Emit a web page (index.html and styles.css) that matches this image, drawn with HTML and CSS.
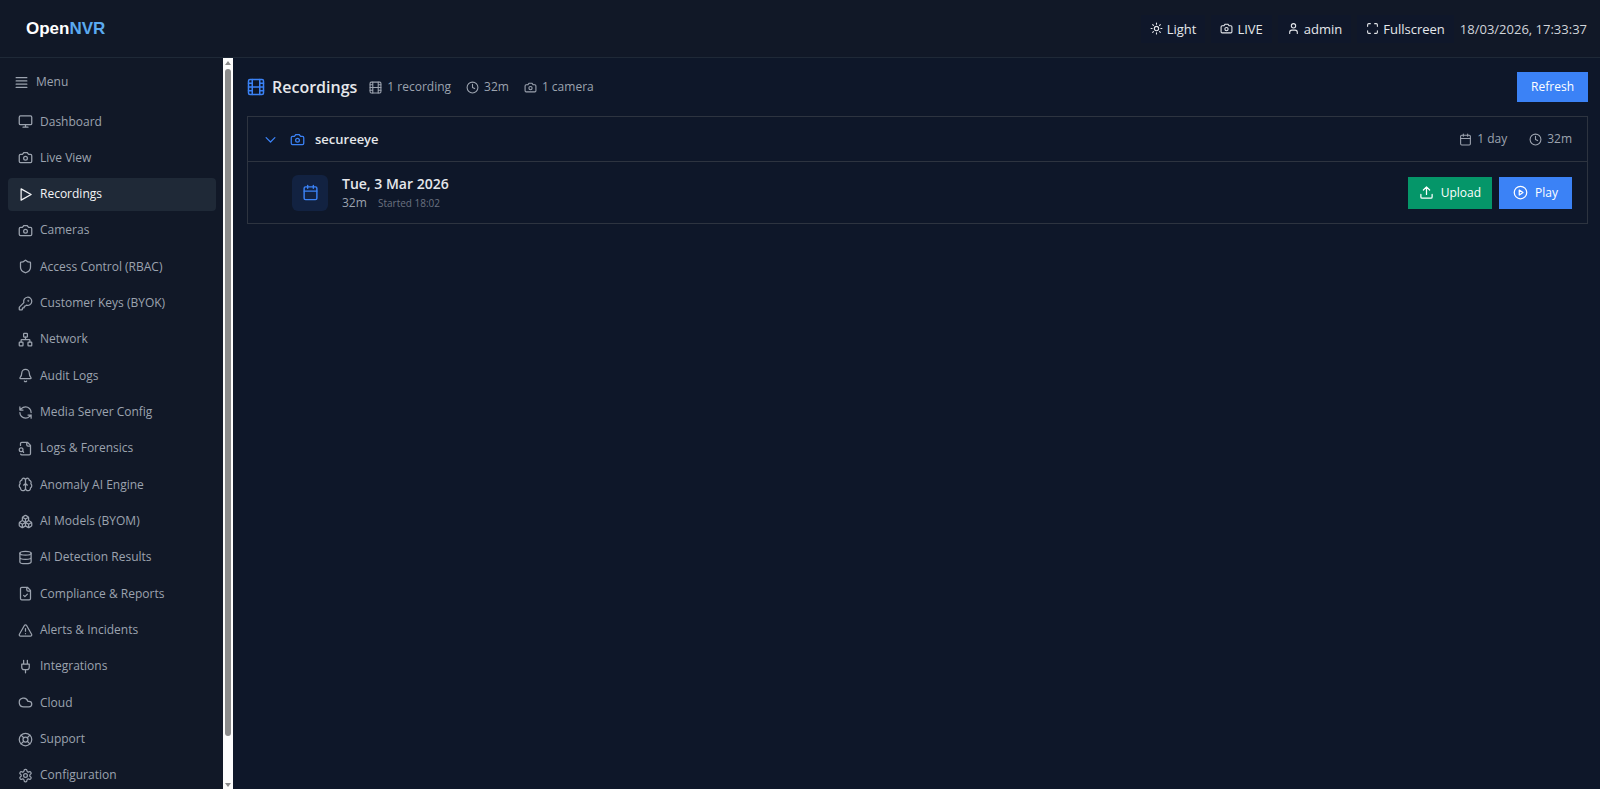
FILE: index.html
```html
<!DOCTYPE html>
<html lang="en">
<head>
	<meta charset="utf-8">
	<title>OpenNVR</title>
	<link rel="stylesheet" href="styles.css">
</head>
<body>
	<!-- icon sprite -->
	<svg class="sprite" aria-hidden="true">
		<symbol id="i-menu" viewBox="0 0 24 24"><path d="M2 3h20M2 9h20M2 15h20M2 21h20"/></symbol>
		<symbol id="i-monitor" viewBox="0 0 24 24"><rect x="2" y="3" width="20" height="14" rx="2"/><path d="M8 21h8M12 17v4"/></symbol>
		<symbol id="i-camera" viewBox="0 0 24 24"><path d="M14.500 4h-5L7 7H4a2 2 0 0 0-2 2v9a2 2 0 0 0 2 2h16a2 2 0 0 0 2-2V9a2 2 0 0 0-2-2h-3z"/><circle cx="12" cy="13" r="3"/></symbol>
		<symbol id="i-play" viewBox="0 0 24 24"><path d="M5 3l16 9-16 9z"/></symbol>
		<symbol id="i-shield" viewBox="0 0 24 24"><path d="M20 13c0 5-3.500 7.500-7.660 8.950a1 1 0 0 1-.67-.01C7.500 20.500 4 18 4 13V6a1 1 0 0 1 1-1c2 0 4.500-1.200 6.240-2.720a1.170 1.170 0 0 1 1.520 0C14.510 3.810 17 5 19 5a1 1 0 0 1 1 1z"/></symbol>
		<symbol id="i-key" viewBox="0 0 24 24"><path d="M2.586 17.414A2 2 0 0 0 2 18.828V21a1 1 0 0 0 1 1h3a1 1 0 0 0 1-1v-1a1 1 0 0 1 1-1h1a1 1 0 0 0 1-1v-1a1 1 0 0 1 1-1h.172a2 2 0 0 0 1.414-.586l.814-.814a6.500 6.500 0 1 0-4-4z"/><circle cx="16.500" cy="7.500" r=".5"/></symbol>
		<symbol id="i-network" viewBox="0 0 24 24"><rect x="16" y="16" width="6" height="6" rx="1"/><rect x="2" y="16" width="6" height="6" rx="1"/><rect x="9" y="2" width="6" height="6" rx="1"/><path d="M5 16v-3a1 1 0 0 1 1-1h12a1 1 0 0 1 1 1v3M12 12V8"/></symbol>
		<symbol id="i-bell" viewBox="0 0 24 24"><path d="M10.268 21a2 2 0 0 0 3.464 0M3.262 15.326A1 1 0 0 0 4 17h16a1 1 0 0 0 .74-1.673C19.410 13.956 18 12.499 18 8A6 6 0 0 0 6 8c0 4.499-1.411 5.956-2.738 7.326"/></symbol>
		<symbol id="i-refresh" viewBox="0 0 24 24"><path d="M21 12a9 9 0 0 0-9-9 9.750 9.750 0 0 0-6.740 2.740L3 8M3 3v5h5M3 12a9 9 0 0 0 9 9 9.750 9.750 0 0 0 6.740-2.740L21 16M16 16h5v5"/></symbol>
		<symbol id="i-filesearch" viewBox="0 0 24 24"><path d="M14 2v4a2 2 0 0 0 2 2h4M4.268 21a2 2 0 0 0 1.727 1H18a2 2 0 0 0 2-2V7l-5-5H6a2 2 0 0 0-2 2v3M9 18l-1.500-1.500"/><circle cx="5" cy="14" r="3"/></symbol>
		<symbol id="i-brain" viewBox="0 0 24 24"><path d="M12 5a3 3 0 1 0-5.997.125 4 4 0 0 0-2.526 5.770 4 4 0 0 0 .556 6.588A4 4 0 1 0 12 18zM12 5a3 3 0 1 1 5.997.125 4 4 0 0 1 2.526 5.770 4 4 0 0 1-.556 6.588A4 4 0 1 1 12 18zM9 13a4.500 4.500 0 0 0 3-4 4.500 4.500 0 0 0 3 4"/></symbol>
		<symbol id="i-boxes" viewBox="0 0 24 24"><path d="M2.970 12.920A2 2 0 0 0 2 14.630v3.240a2 2 0 0 0 .970 1.710l3 1.800a2 2 0 0 0 2.060 0L12 19v-5.500l-5-3zM7 16.500l-4.740-2.850M7 16.500l5-3M7 16.500v5.170M12 13.500V19l3.970 2.380a2 2 0 0 0 2.060 0l3-1.800a2 2 0 0 0 .970-1.710v-3.240a2 2 0 0 0-.970-1.710L17 10.500zM17 16.500l-5-3M17 16.500l4.740-2.850M17 16.500v5.170M7.970 4.420A2 2 0 0 0 7 6.130v4.370l5 3 5-3V6.130a2 2 0 0 0-.970-1.710l-3-1.800a2 2 0 0 0-2.060 0zM12 8L7.260 5.150M12 8l4.740-2.850M12 13.500V8"/></symbol>
		<symbol id="i-database" viewBox="0 0 24 24"><ellipse cx="12" cy="5" rx="9" ry="3"/><path d="M3 5v14a9 3 0 0 0 18 0V5M3 12a9 3 0 0 0 18 0"/></symbol>
		<symbol id="i-filecheck" viewBox="0 0 24 24"><path d="M15 2H6a2 2 0 0 0-2 2v16a2 2 0 0 0 2 2h12a2 2 0 0 0 2-2V7zM14 2v4a2 2 0 0 0 2 2h4M9 15l2 2 4-4"/></symbol>
		<symbol id="i-alert" viewBox="0 0 24 24"><path d="M21.730 18l-8-14a2 2 0 0 0-3.480 0l-8 14A2 2 0 0 0 4 21h16a2 2 0 0 0 1.730-3M12 9v4M12 17h.01"/></symbol>
		<symbol id="i-plug" viewBox="0 0 24 24"><path d="M12 22v-5M9 8V2M15 8V2M18 8v5a4 4 0 0 1-4 4h-4a4 4 0 0 1-4-4V8z"/></symbol>
		<symbol id="i-cloud" viewBox="0 0 24 24"><path d="M17.500 19H9a7 7 0 1 1 6.710-9h1.790a4.500 4.500 0 1 1 0 9z"/></symbol>
		<symbol id="i-support" viewBox="0 0 24 24"><circle cx="12" cy="12" r="10"/><circle cx="12" cy="12" r="4"/><path d="M4.930 4.930l4.240 4.240M14.830 9.170l4.240-4.240M14.830 14.830l4.240 4.240M9.170 14.830l-4.240 4.240"/></symbol>
		<symbol id="i-settings" viewBox="0 0 24 24"><path d="M12.220 2h-.44a2 2 0 0 0-2 2v.18a2 2 0 0 1-1 1.730l-.43.25a2 2 0 0 1-2 0l-.15-.08a2 2 0 0 0-2.730.73l-.22.38a2 2 0 0 0 .73 2.730l.15.1a2 2 0 0 1 1 1.720v.51a2 2 0 0 1-1 1.740l-.15.09a2 2 0 0 0-.73 2.730l.22.38a2 2 0 0 0 2.730.73l.15-.08a2 2 0 0 1 2 0l.43.25a2 2 0 0 1 1 1.730V20a2 2 0 0 0 2 2h.44a2 2 0 0 0 2-2v-.18a2 2 0 0 1 1-1.730l.43-.25a2 2 0 0 1 2 0l.15.08a2 2 0 0 0 2.730-.73l.22-.39a2 2 0 0 0-.73-2.730l-.15-.08a2 2 0 0 1-1-1.740v-.5a2 2 0 0 1 1-1.740l.15-.09a2 2 0 0 0 .73-2.730l-.22-.38a2 2 0 0 0-2.730-.73l-.15.08a2 2 0 0 1-2 0l-.43-.25a2 2 0 0 1-1-1.730V4a2 2 0 0 0-2-2z"/><circle cx="12" cy="12" r="3"/></symbol>
		<symbol id="i-sun" viewBox="0 0 24 24"><circle cx="12" cy="12" r="4"/><path d="M12 2v2M12 20v2M4.930 4.930l1.410 1.410M17.660 17.660l1.410 1.410M2 12h2M20 12h2M6.340 17.660l-1.410 1.410M19.070 4.930l-1.410 1.410"/></symbol>
		<symbol id="i-user" viewBox="0 0 24 24"><path d="M19 21v-2a4 4 0 0 0-4-4H9a4 4 0 0 0-4 4v2"/><circle cx="12" cy="7" r="4"/></symbol>
		<symbol id="i-full" viewBox="0 0 24 24"><path d="M8 3H5a2 2 0 0 0-2 2v3M21 8V5a2 2 0 0 0-2-2h-3M3 16v3a2 2 0 0 0 2 2h3M16 21h3a2 2 0 0 0 2-2v-3"/></symbol>
		<symbol id="i-film" viewBox="0 0 24 24"><rect x="2" y="2" width="20" height="20" rx="2"/><path d="M7 2v20M17 2v20M2 12h20M2 7h5M2 17h5M17 17h5M17 7h5"/></symbol>
		<symbol id="i-clock" viewBox="0 0 24 24"><circle cx="12" cy="12" r="10"/><path d="M12 6v6l4 2"/></symbol>
		<symbol id="i-chevron" viewBox="0 0 24 24"><path d="M5 9l7 7 7-7"/></symbol>
		<symbol id="i-calendar" viewBox="0 0 24 24"><rect x="3" y="4" width="18" height="18" rx="2"/><path d="M8 2v4M16 2v4M3 10h18"/></symbol>
		<symbol id="i-upload" viewBox="0 0 24 24"><path d="M21 15v4a2 2 0 0 1-2 2H5a2 2 0 0 1-2-2v-4M17 8l-5-5-5 5M12 3v12"/></symbol>
		<symbol id="i-playcircle" viewBox="0 0 24 24"><circle cx="12" cy="12" r="10"/><path d="M10 8l6 4-6 4z"/></symbol>
	</svg>

	<header class="topbar">
		<a class="logo" href="#">Open<span>NVR</span></a>
		<div class="tools">
			<button class="tool"><svg class="icon sm"><use href="#i-sun"/></svg>Light</button>
			<button class="tool"><svg class="icon sm"><use href="#i-camera"/></svg>LIVE</button>
			<button class="tool"><svg class="icon sm"><use href="#i-user"/></svg>admin</button>
			<button class="tool"><svg class="icon sm"><use href="#i-full"/></svg>Fullscreen</button>
			<time class="clock">18/03/2026, 17:33:37</time>
		</div>
	</header>

	<div class="layout">
		<aside class="sidebar">
			<button class="menu-btn"><svg class="icon sm"><use href="#i-menu"/></svg>Menu</button>
			<nav class="nav">
				<a href="#"><svg class="icon"><use href="#i-monitor"/></svg>Dashboard</a>
				<a href="#"><svg class="icon"><use href="#i-camera"/></svg>Live View</a>
				<a href="#" class="active"><svg class="icon"><use href="#i-play"/></svg>Recordings</a>
				<a href="#"><svg class="icon"><use href="#i-camera"/></svg>Cameras</a>
				<a href="#"><svg class="icon"><use href="#i-shield"/></svg>Access Control (RBAC)</a>
				<a href="#"><svg class="icon"><use href="#i-key"/></svg>Customer Keys (BYOK)</a>
				<a href="#"><svg class="icon"><use href="#i-network"/></svg>Network</a>
				<a href="#"><svg class="icon"><use href="#i-bell"/></svg>Audit Logs</a>
				<a href="#"><svg class="icon"><use href="#i-refresh"/></svg>Media Server Config</a>
				<a href="#"><svg class="icon"><use href="#i-filesearch"/></svg>Logs &amp; Forensics</a>
				<a href="#"><svg class="icon"><use href="#i-brain"/></svg>Anomaly AI Engine</a>
				<a href="#"><svg class="icon"><use href="#i-boxes"/></svg>AI Models (BYOM)</a>
				<a href="#"><svg class="icon"><use href="#i-database"/></svg>AI Detection Results</a>
				<a href="#"><svg class="icon"><use href="#i-filecheck"/></svg>Compliance &amp; Reports</a>
				<a href="#"><svg class="icon"><use href="#i-alert"/></svg>Alerts &amp; Incidents</a>
				<a href="#"><svg class="icon"><use href="#i-plug"/></svg>Integrations</a>
				<a href="#"><svg class="icon"><use href="#i-cloud"/></svg>Cloud</a>
				<a href="#"><svg class="icon"><use href="#i-support"/></svg>Support</a>
				<a href="#"><svg class="icon"><use href="#i-settings"/></svg>Configuration</a>
			</nav>
		</aside>
		<div class="scrollbar" aria-hidden="true">
			<i class="arrow up"></i>
			<div class="track"><div class="thumb"></div></div>
			<i class="arrow down"></i>
		</div>

		<main class="content">
			<div class="page-head">
				<svg class="icon lg blue"><use href="#i-film"/></svg>
				<h1>Recordings</h1>
				<div class="stats">
					<span><svg class="icon sm"><use href="#i-film"/></svg>1 recording</span>
					<span><svg class="icon sm"><use href="#i-clock"/></svg>32m</span>
					<span><svg class="icon sm"><use href="#i-camera"/></svg>1 camera</span>
				</div>
				<button class="btn refresh">Refresh</button>
			</div>

			<section class="panel">
				<div class="camera-row">
					<svg class="icon blue"><use href="#i-chevron"/></svg>
					<div class="camera-name">
						<svg class="icon blue"><use href="#i-camera"/></svg>
						<h2>secureeye</h2>
					</div>
					<div class="meta">
						<span><svg class="icon sm"><use href="#i-calendar"/></svg>1 day</span>
						<span><svg class="icon sm"><use href="#i-clock"/></svg>32m</span>
					</div>
				</div>
				<div class="day-row">
					<div class="day-icon"><svg class="icon md blue"><use href="#i-calendar"/></svg></div>
					<div class="day-info">
						<h3>Tue, 3 Mar 2026</h3>
						<p>32m <small>Started 18:02</small></p>
					</div>
					<div class="actions">
						<button class="btn upload"><svg class="icon"><use href="#i-upload"/></svg>Upload</button>
						<button class="btn play"><svg class="icon"><use href="#i-playcircle"/></svg>Play</button>
					</div>
				</div>
			</section>
		</main>
	</div>
</body>
</html>
```

FILE: styles.css
```css
*{
	margin: 0;
	padding: 0;
	box-sizing: border-box;
}

body{
	display: flex;
	flex-direction: column;
	height: 100vh;
	overflow: hidden;
	background: #0e1729;
	color: #e5e7eb;
	font: 12px/20px "Open Sans", "Noto Sans", sans-serif;
}

button{
	border: none;
	background: none;
	color: inherit;
	font: inherit;
	cursor: pointer;
}
a{
	color: inherit;
	text-decoration: none;
}

.sprite{
	display: none;
}
.icon{
	flex: none;
	width: 15px;
	height: 15px;
	fill: none;
	stroke: currentColor;
	stroke-width: 2;
	stroke-linecap: round;
	stroke-linejoin: round;
}
.icon.sm{
	width: 13px;
	height: 13px;
}
.icon.md{
	width: 17px;
	height: 17px;
}
.icon.lg{
	width: 18px;
	height: 18px;
}
.blue{
	color: #3b82f6;
}

/* top bar */
.topbar{
	display: flex;
	flex: none;
	align-items: center;
	justify-content: space-between;
	height: 58px;
	padding: 0 13px 0 26px;
	border-bottom: 1px solid #1f2937;
	background: #111827;
}
.logo{
	color: #fff;
	font: bold 17px/24px "Liberation Sans", Arial, sans-serif;
}
.logo span{
	color: #5aaaf0;
}
.tools{
	display: flex;
	align-items: center;
	font-size: 13px;
}
.tool{
	display: flex;
	align-items: center;
	gap: 4px;
	padding: 4px 9px;
	margin-right: 6px;
	background: #0f172a;
}
.clock{
	color: #d1d5db;
}

.layout{
	display: flex;
	flex: 1;
	min-height: 0;
}

/* sidebar */
.sidebar{
	display: flex;
	flex-direction: column;
	width: 223px;
	padding: 14px 7px 0 8px;
	background: #111827;
	color: #9ca3af;
}
.menu-btn{
	display: flex;
	align-items: center;
	gap: 8px;
	padding: 0 7px;
}
.nav{
	display: flex;
	flex: 1;
	flex-direction: column;
	justify-content: space-between;
	margin-bottom: -3px;
	padding-top: 13px;
}
.nav a{
	display: flex;
	align-items: center;
	gap: 7px;
	height: 33px;
	padding: 0 10px;
	border-radius: 4px;
}
.nav a.active{
	background: #1f2937;
	color: #f3f4f6;
}

.scrollbar{
	display: flex;
	flex-direction: column;
	align-items: center;
	width: 10px;
	padding: 3px 0 2px;
	background: #fcfcfc;
}
.arrow{
	border: 3px solid transparent;
}
.arrow.up{
	border-top: none;
	border-bottom: 4px solid #8b8b8b;
}
.arrow.down{
	border-bottom: none;
	border-top: 4px solid #8b8b8b;
}
.track{
	flex: 1;
	padding: 4px 0;
}
.thumb{
	width: 6px;
	height: 94%;
	border-radius: 3px;
	background: #8b8b8b;
}

/* content */
.content{
	flex: 1;
	padding: 14px 12px 14px 14px;
}
.page-head{
	display: flex;
	align-items: center;
	margin-bottom: 14px;
}
h1{
	margin: 0 12px 0 7px;
	font-size: 16px;
	font-weight: 600;
	line-height: 24px;
}
.stats,.meta{
	display: flex;
	gap: 15px;
	color: #9ca3af;
}
.stats span,.meta span{
	display: flex;
	align-items: center;
	gap: 5px;
}
.btn{
	display: flex;
	align-items: center;
	gap: 7px;
	height: 32px;
	padding: 0 14px;
	background: #3b82f6;
	color: #fff;
}
.refresh{
	height: 30px;
	margin-left: auto;
}
.upload{
	padding: 0 11px;
	background: #059669;
}

.panel{
	border: 1px solid #2d3440;
}
.camera-row{
	display: flex;
	align-items: center;
	gap: 12px;
	height: 45px;
	padding: 0 15px;
	border-bottom: 1px solid #2d3440;
}
.camera-name{
	display: flex;
	align-items: center;
	gap: 10px;
}
h2{
	font-size: 13px;
	font-weight: 600;
}
.meta{
	gap: 22px;
	margin-left: auto;
}
.day-row{
	display: flex;
	align-items: center;
	height: 61px;
	padding: 0 15px 0 44px;
}
.day-icon{
	display: flex;
	align-items: center;
	justify-content: center;
	width: 36px;
	height: 36px;
	margin-right: 14px;
	border-radius: 6px;
	background: #122241;
}
h3{
	font-size: 14px;
	font-weight: 600;
	line-height: 20px;
}
.day-info p{
	color: #9ca3af;
	line-height: 18px;
}
.day-info small{
	margin-left: 8px;
	color: #6b7280;
	font-size: 10px;
}
.actions{
	display: flex;
	gap: 7px;
	margin-left: auto;
}
```
